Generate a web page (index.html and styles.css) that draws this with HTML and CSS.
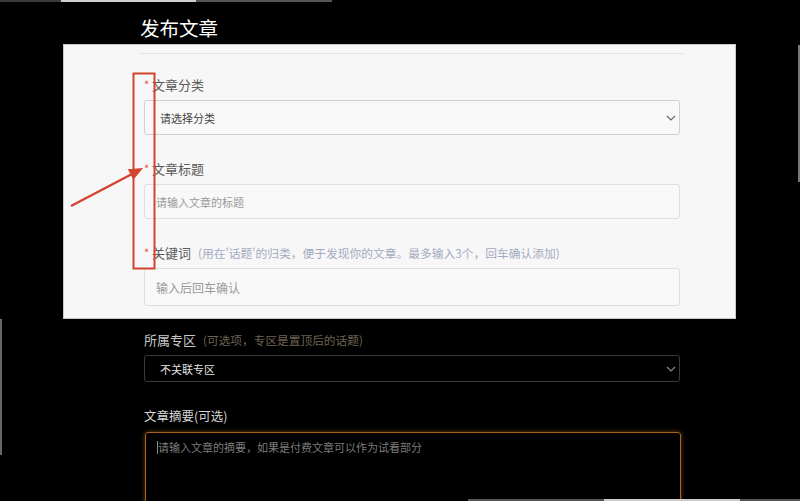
FILE: index.html
```html
<!DOCTYPE html>
<html lang="zh-CN">
<head>
<meta charset="utf-8">
<title>发布文章</title>
<link rel="stylesheet" href="styles.css">
</head>
<body>
<div class="page">
  <h1 class="title">发布文章</h1>

  <section class="panel">
    <div class="divider"></div>
    <div class="field">
      <div class="label"><span class="req">*</span>文章分类</div>
      <div class="select light">
        <span>请选择分类</span>
        <svg class="chev" width="10" height="6" viewBox="0 0 10 6"><path d="M1 1 L5 5 L9 1" fill="none" stroke="#666" stroke-width="1.2"/></svg>
      </div>
    </div>
    <div class="field">
      <div class="label"><span class="req">*</span>文章标题</div>
      <div class="input light">请输入文章的标题</div>
    </div>
    <div class="field">
      <div class="label"><span class="req">*</span>关键词<span class="hint">(用在'话题'的归类，便于发现你的文章。最多输入3个，回车确认添加)</span></div>
      <div class="input light tall">输入后回车确认</div>
    </div>
  </section>

  <section class="dark">
    <div class="field">
      <div class="label">所属专区<span class="hint">(可选项，专区是置顶后的话题)</span></div>
      <div class="select darksel">
        <span>不关联专区</span>
        <svg class="chev" width="10" height="6" viewBox="0 0 10 6"><path d="M1 1 L5 5 L9 1" fill="none" stroke="#8a8a8a" stroke-width="1.2"/></svg>
      </div>
    </div>
    <div class="field">
      <div class="label">文章摘要(可选)</div>
      <div class="textarea"><span class="caret"></span>请输入文章的摘要，如果是付费文章可以作为试看部分</div>
    </div>
  </section>

  <svg class="annot" width="800" height="501" viewBox="0 0 800 501">
    <rect x="133.5" y="73.5" width="21" height="195" fill="none" stroke="#d4432e" stroke-width="2"/>
    <line x1="71" y1="206" x2="132" y2="174" stroke="#d4432e" stroke-width="2.4"/>
    <polygon points="143,168 133.4,179.8 127.8,169.2" fill="#d4432e"/>
  </svg>

  <div class="edge edge-top"><i class="e1"></i><i class="e2"></i><i class="e3"></i></div>
  <div class="edge edge-left"></div>
  <div class="edge edge-right"></div>
  <div class="edge edge-bottom"><i class="b1"></i><i class="b2"></i><i class="b3"></i></div>
</div>
</body>
</html>
```

FILE: styles.css
```css
* { box-sizing: border-box; }
html, body {
  margin: 0;
  padding: 0;
  background: #000;
  width: 800px;
  height: 501px;
  overflow: hidden;
  font-family: "Noto Sans CJK SC", "Noto Sans", sans-serif;
}
.page {
  position: relative;
  width: 800px;
  height: 501px;
  padding-top: 14px;
  overflow: hidden;
}
.title {
  margin: 0 0 2px 0;
  padding-left: 140px;
  font-size: 19.5px;
  line-height: 28px;
  font-weight: 400;
  color: #fff;
}
.panel {
  margin-left: 63px;
  width: 673px;
  height: 275px;
  background: #f7f7f7;
  border: 1px solid #c9c9c9;
  padding: 8px 0 0 80px;
}
.divider {
  margin-left: -5px;
  width: 545px;
  height: 1px;
  background: #e3e3e3;
  margin-bottom: 22px;
}
.field { width: 536px; }
.field + .field { margin-top: 25px; }
.label {
  height: 18px;
  line-height: 18px;
  font-size: 13px;
  color: #5a5a5a;
  margin-bottom: 6px;
  white-space: nowrap;
  display: flex;
  align-items: center;
}
.req {
  color: #e0553f;
  font-size: 11px;
  width: 8px;
  margin-top: -3px;
}
.hint {
  font-size: 11.75px;
  color: #a3abc2;
  margin-left: 7px;
}
.select, .input {
  display: flex;
  align-items: center;
  border-radius: 3px;
  font-size: 11px;
}
.select { justify-content: space-between; padding: 0 3px 0 15px; }
.select.light {
  height: 35px;
  border: 1px solid #cfcfcf;
  color: #444;
  background: #f8f8f8;
}
.input.light {
  height: 35px;
  border: 1px solid #dcdfe7;
  color: #9a9a9a;
  padding-left: 11px;
  background: #f8f8f8;
}
.input.tall { height: 38px; font-size: 12px; }
.chev { display: block; }

.dark {
  padding: 12px 0 0 144px;
}
.dark .label { color: #c8c8c8; font-size: 13px; }
.dark .hint { color: #6e6352; font-size: 11.7px; }
.select.darksel {
  height: 27px;
  border: 1px solid #3a3a3a;
  color: #e0e0e0;
  background: #000;
}
.dark .field + .field .label { font-size: 12.5px; color: #d6d6d6; margin-bottom: 7px; }
.textarea {
  margin-left: 1px;
  width: 536px;
  height: 100px;
  border: 1px solid #a8621f;
  border-radius: 3px;
  box-shadow: 0 0 4px rgba(200, 120, 40, 0.55);
  color: #7c7c7c;
  font-size: 11px;
  line-height: 16px;
  padding: 6px 0 0 11px;
  display: flex;
  align-items: flex-start;
}
.caret {
  display: inline-block;
  width: 1px;
  height: 13px;
  background: #8a8a8a;
  margin-top: 2px;
}

.annot {
  position: absolute;
  top: 0;
  left: 0;
  pointer-events: none;
}
.edge { position: absolute; }
.edge-top { top: 0; left: 0; height: 2px; display: flex; }
.edge-top i, .edge-bottom i { display: block; height: 2px; }
.e1 { width: 61px; background: #3a3a3a; }
.e2 { width: 135px; background: #cfcfcf; }
.e3 { width: 136px; background: #555; }
.edge-left { left: 0; top: 319px; width: 2px; height: 136px; background: #666; }
.edge-right { right: 0; top: 45px; width: 2px; height: 137px; background: #777; }
.edge-bottom { bottom: 0; left: 468px; height: 2px; display: flex; }
.b1 { width: 136px; background: #555; }
.b2 { width: 136px; background: #ccc; }
.b3 { width: 60px; background: #555; }
```
